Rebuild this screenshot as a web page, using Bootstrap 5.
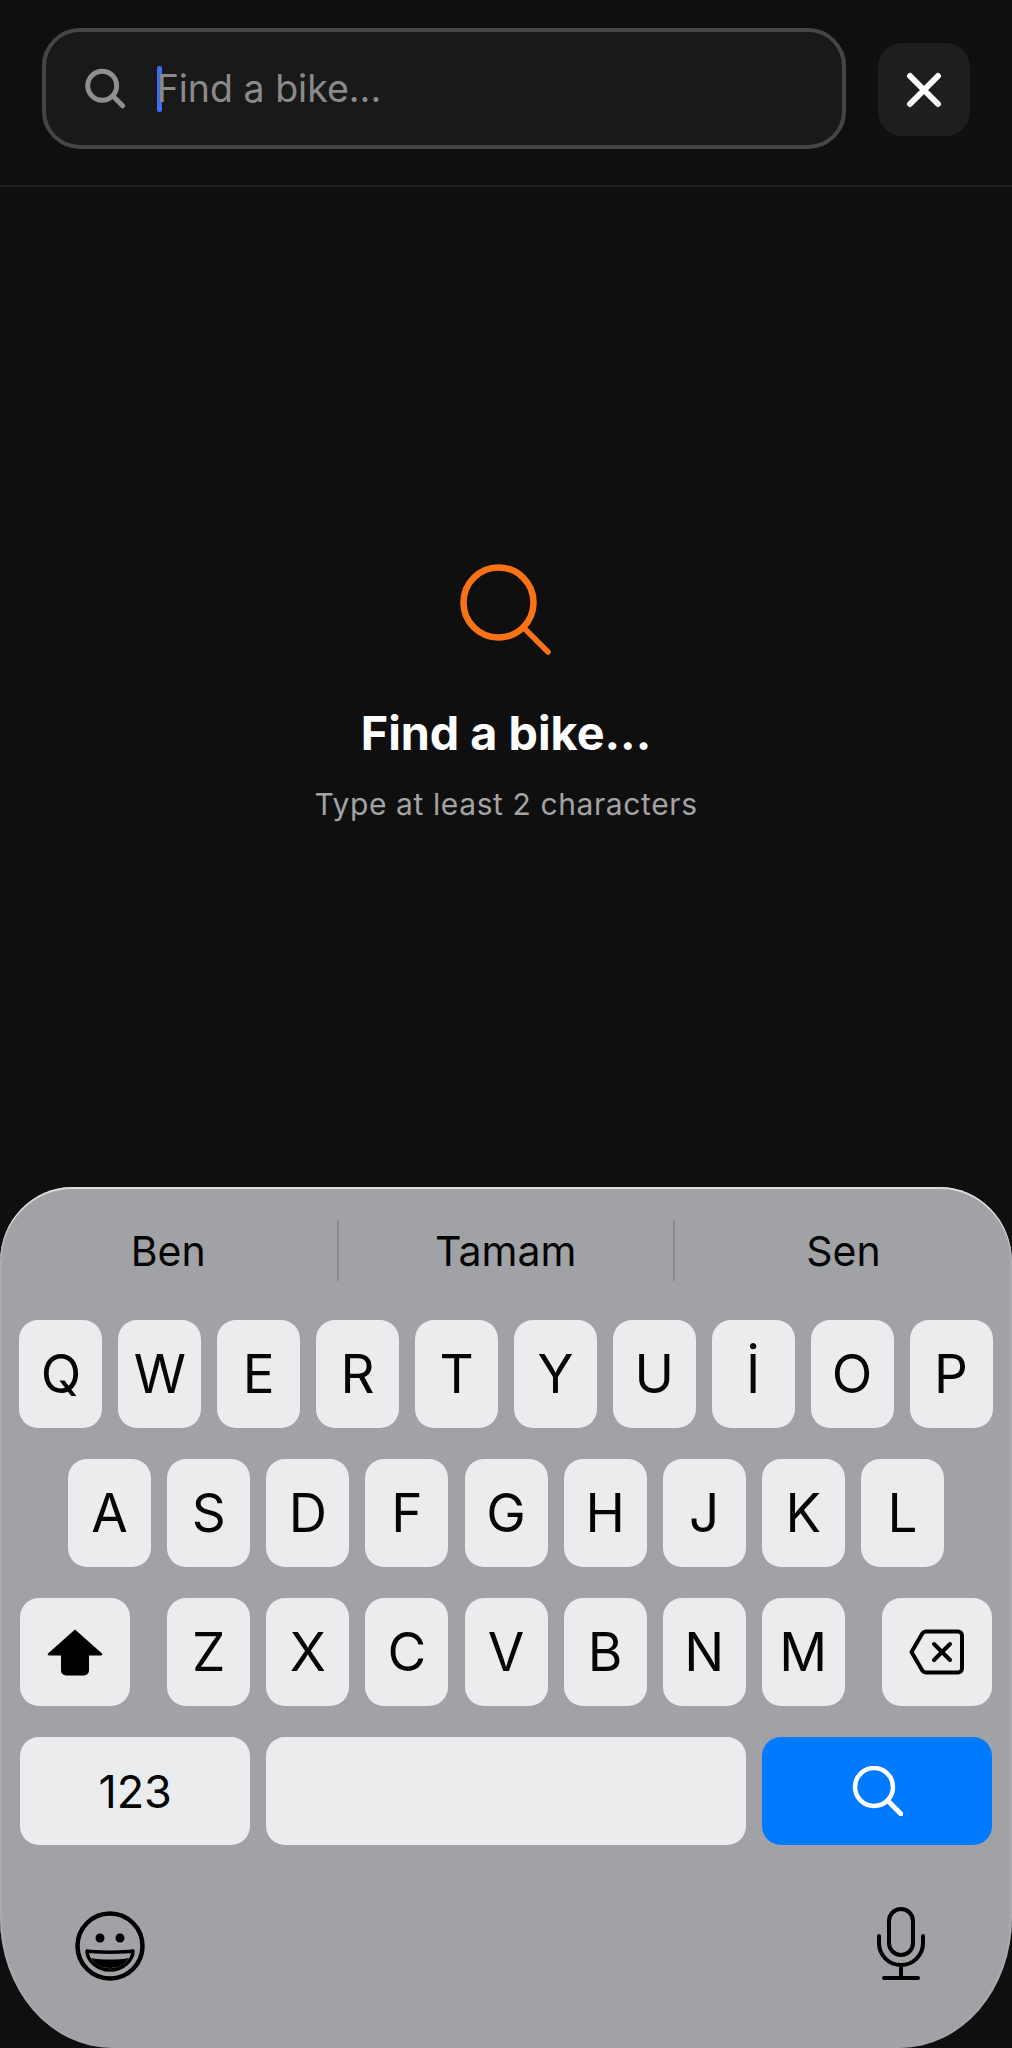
<!DOCTYPE html>
<html lang="en">
<head>
    <meta charset="UTF-8">
    <meta name="viewport" content="width=device-width, initial-scale=1.0">
    <title>Find a bike</title>
    <link rel="stylesheet" href="https://cdn.jsdelivr.net/npm/bootstrap@5.3.0/dist/css/bootstrap.min.css">
    <style>
        body { background: #0f0f10; font-family: Inter, "Liberation Sans", sans-serif; }
        .screen { height: 2048px; }
        .top-bar { height: 187px; padding: 28px 42px 0; border-bottom: 2px solid #1e1e1f; gap: 32px; }
        .search-box { width: 804px; height: 121px; padding-left: 39px; background: #191919; border: 4px solid #454545; border-radius: 38px; }
        .search-caret { width: 5px; height: 46px; margin-left: 30px; background: #3f6cf0; border-radius: 2px; flex-shrink: 0; }
        .search-input.form-control { background: transparent; border: 0; box-shadow: none; padding: 2px 0 0; margin-left: -5px; font-size: 37.5px; color: #fff; }
        .search-input::placeholder { color: #8a8a8a; opacity: 1; }
        .close-btn { width: 92px; height: 93px; margin-top: 15px; background: #1e1e1e; border-radius: 24px; }
        .empty-state { padding-top: 377px; }
        .empty-title { margin: 50px 0 0; font-size: 46.7px; line-height: 54px; font-weight: 700; color: #fff; }
        .empty-sub { margin: 26px 0 0; font-size: 30px; line-height: 36px; letter-spacing: .6px; color: #a3a3a3; }
        .keyboard { height: 861px; background: #a1a2a6; border-radius: 72px 72px 112px 112px / 75px 75px 130px 130px; box-shadow: inset 0 2px 0 rgba(255,255,255,.6), inset 2px 0 1px rgba(255,255,255,.12), inset -2px 0 1px rgba(255,255,255,.12); color: #050505; }
        .suggest-row { height: 133px; padding-top: 33px; }
        .suggest-item { flex: 0 0 336.5px; height: 61px; padding-top: 2px; font-size: 41px; }
        .suggest-item + .suggest-item { border-left: 2px solid #8b8c90; }
        .suggest-item:last-child { flex-grow: 1; }
        .key-row { gap: 15.9px; margin-bottom: 31px; }
        .key-row.home-row, .key-letters { gap: 16.1px; }
        .key-row.edge { padding: 0 20px; }
        .kb-key { width: 83px; height: 108px; background: #ebecee; border-radius: 19px; font-size: 53px; line-height: 1; }
        .kb-wide { width: 110px; }
        .kb-mode { width: 231px; font-size: 45px; }
        .kb-space { width: 481px; }
        .kb-go { width: 231px; background: #007aff; }
        .kb-bottom { padding: 62px 86px 0 75px; }
    </style>
</head>
<body>
    <div class="screen d-flex flex-column">
        <!-- search bar -->
        <div class="top-bar d-flex align-items-start">
            <div class="search-box d-flex align-items-center">
                <svg width="46" height="44" viewBox="0 0 46 44" fill="none" stroke="#8f8f8f" stroke-width="5.500" stroke-linecap="round"><circle cx="19" cy="18.500" r="16"/><path d="M31 30l10.500 10.500"/></svg>
                <span class="search-caret"></span>
                <input class="form-control search-input" type="text" placeholder="Find a bike...">
            </div>
            <div class="close-btn d-flex align-items-center justify-content-center">
                <svg width="36" height="36" viewBox="0 0 36 36" fill="none" stroke="#fff" stroke-width="6" stroke-linecap="round"><path d="M4 4l28 28M32 4L4 32"/></svg>
            </div>
        </div>

        <!-- empty state -->
        <div class="empty-state flex-grow-1 d-flex flex-column align-items-center text-center">
            <svg width="92" height="92" viewBox="0 0 92 92" fill="none" stroke="#f97316" stroke-linecap="round"><circle cx="38.500" cy="38.500" r="35" stroke-width="6.500"/><path d="M64 64l24 24" stroke-width="5.500"/></svg>
            <h2 class="empty-title">Find a bike...</h2>
            <p class="empty-sub">Type at least 2 characters</p>
        </div>

        <!-- keyboard -->
        <div class="keyboard">
            <div class="suggest-row d-flex">
                <div class="suggest-item d-flex align-items-center justify-content-center">Ben</div>
                <div class="suggest-item d-flex align-items-center justify-content-center">Tamam</div>
                <div class="suggest-item d-flex align-items-center justify-content-center">Sen</div>
            </div>
            <div class="key-row d-flex justify-content-center">
                <div class="kb-key d-flex align-items-center justify-content-center">Q</div>
                <div class="kb-key d-flex align-items-center justify-content-center">W</div>
                <div class="kb-key d-flex align-items-center justify-content-center">E</div>
                <div class="kb-key d-flex align-items-center justify-content-center">R</div>
                <div class="kb-key d-flex align-items-center justify-content-center">T</div>
                <div class="kb-key d-flex align-items-center justify-content-center">Y</div>
                <div class="kb-key d-flex align-items-center justify-content-center">U</div>
                <div class="kb-key d-flex align-items-center justify-content-center">İ</div>
                <div class="kb-key d-flex align-items-center justify-content-center">O</div>
                <div class="kb-key d-flex align-items-center justify-content-center">P</div>
            </div>
            <div class="key-row home-row d-flex justify-content-center">
                <div class="kb-key d-flex align-items-center justify-content-center">A</div>
                <div class="kb-key d-flex align-items-center justify-content-center">S</div>
                <div class="kb-key d-flex align-items-center justify-content-center">D</div>
                <div class="kb-key d-flex align-items-center justify-content-center">F</div>
                <div class="kb-key d-flex align-items-center justify-content-center">G</div>
                <div class="kb-key d-flex align-items-center justify-content-center">H</div>
                <div class="kb-key d-flex align-items-center justify-content-center">J</div>
                <div class="kb-key d-flex align-items-center justify-content-center">K</div>
                <div class="kb-key d-flex align-items-center justify-content-center">L</div>
            </div>
            <div class="key-row edge d-flex justify-content-between">
                <div class="kb-key kb-wide d-flex align-items-center justify-content-center">
                    <svg width="56" height="48" viewBox="0 0 56 48"><path d="M28 1.500L55 25.500a1.200 1.200 0 0 1-1 2H42v15a5 5 0 0 1-5 5H19a5 5 0 0 1-5-5v-15H2a1.200 1.200 0 0 1-1-2z" fill="#000"/></svg>
                </div>
                <div class="key-letters d-flex">
                    <div class="kb-key d-flex align-items-center justify-content-center">Z</div>
                    <div class="kb-key d-flex align-items-center justify-content-center">X</div>
                    <div class="kb-key d-flex align-items-center justify-content-center">C</div>
                    <div class="kb-key d-flex align-items-center justify-content-center">V</div>
                    <div class="kb-key d-flex align-items-center justify-content-center">B</div>
                    <div class="kb-key d-flex align-items-center justify-content-center">N</div>
                    <div class="kb-key d-flex align-items-center justify-content-center">M</div>
                </div>
                <div class="kb-key kb-wide d-flex align-items-center justify-content-center">
                    <svg width="56" height="46" viewBox="0 0 56 46" fill="none" stroke="#000" stroke-width="4" stroke-linecap="round" stroke-linejoin="round"><path d="M17 2.500h32a4 4 0 0 1 4 4v33a4 4 0 0 1-4 4H17a5 5 0 0 1-3.500-1.800L2.500 23 13.500 4.300A5 5 0 0 1 17 2.500z"/><path d="M25 15l16 16M41 15L25 31"/></svg>
                </div>
            </div>
            <div class="key-row edge d-flex justify-content-between mb-0">
                <div class="kb-key kb-mode d-flex align-items-center justify-content-center">123</div>
                <div class="kb-key kb-space"></div>
                <div class="kb-key kb-go d-flex align-items-center justify-content-center">
                    <svg width="52" height="50" viewBox="0 0 52 50" fill="none" stroke="#fff" stroke-linecap="round"><circle cx="23" cy="21" r="19" stroke-width="4.500"/><path d="M37 35l13 13" stroke-width="5"/></svg>
                </div>
            </div>
            <div class="kb-bottom d-flex justify-content-between align-items-end">
                <svg width="70" height="70" viewBox="0 0 70 70" fill="none"><circle cx="35" cy="35" r="32.500" stroke="#000" stroke-width="4.500"/><circle cx="25" cy="27" r="4.500" fill="#000"/><circle cx="45" cy="27" r="4.500" fill="#000"/><path d="M12 40c7 1.500 39 1.500 46 0 0 9-10 19-23 19S12 49 12 40z" stroke="#000" stroke-width="3.500" stroke-linejoin="round"/><path d="M16.500 47c9 2 28 2 37 0-3 6-10 10-18.500 10S19.500 53 16.500 47z" fill="#000"/></svg>
                <svg width="50" height="74" viewBox="0 0 50 74" fill="none" stroke="#000" stroke-width="4" stroke-linecap="round"><rect x="13" y="2" width="24" height="46" rx="12"/><path d="M3 29v7a22 22 0 0 0 44 0v-7M25 58v13M8 71h34"/></svg>
            </div>
        </div>
    </div>

    <script src="https://cdn.jsdelivr.net/npm/bootstrap@5.3.0/dist/js/bootstrap.bundle.min.js"></script>
</body>
</html>
